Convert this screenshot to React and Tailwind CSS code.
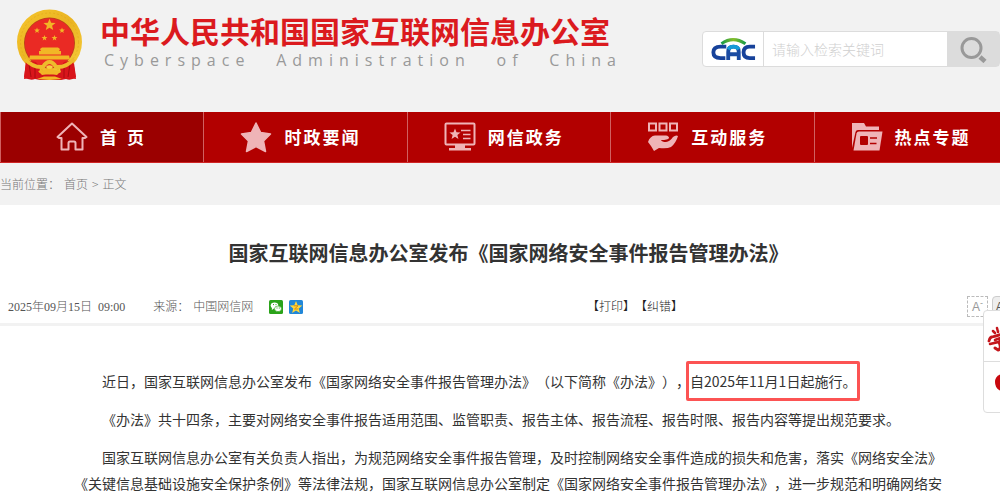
const STAR = "M0,-10 L2.6,-3.4 L9.6,-3.1 L4.1,1.3 L5.9,8.1 L0,4.3 L-5.9,8.1 L-4.1,1.3 L-9.6,-3.1 L-2.6,-3.4 Z";

function Emblem() {
  return (
    <svg width="68" height="72" viewBox="0 0 68 72" role="img" aria-label="国徽" className="shrink-0">
      <defs>
        <linearGradient id="gold" x1="0" y1="0" x2="1" y2="1">
          <stop offset="0" stopColor="#f5c52c" />
          <stop offset="0.5" stopColor="#eab422" />
          <stop offset="1" stopColor="#f8cf3c" />
        </linearGradient>
      </defs>
      <path d="M11 48 L8 69 Q14 73 19 71 L24 72 H45 L50 71 Q55 73 60 69 L57 48 Z" fill="#d3141a" />
      <ellipse cx="33.5" cy="34" rx="32.5" ry="32.5" fill="url(#gold)" />
      <ellipse cx="33.5" cy="34" rx="29" ry="29" fill="none" stroke="#d99a16" strokeWidth="1" strokeDasharray="2 2" opacity="0.4" />
      <ellipse cx="33.5" cy="35" rx="25.5" ry="25.5" fill="#b8441a" />
      <ellipse cx="33.5" cy="35" rx="24.7" ry="24.7" fill="#ea2a24" />
      <g fill="#f2b626">
        <path d={STAR} transform="translate(33.5 17) scale(.63)" />
        <path d={STAR} transform="translate(21 22.500) scale(.3)" />
        <path d={STAR} transform="translate(46 22.500) scale(.3)" />
        <path d={STAR} transform="translate(28.5 30) scale(.3)" />
        <path d={STAR} transform="translate(38.5 30) scale(.3)" />
        <path d="M24 41 L26 39.500 H42 L44 41 L43 43 H45 V46.500 H23 V43 H25 Z" />
        <path d="M14 47.500 H53 L54 51.500 H13 Z" />
      </g>
      <path d="M10 52 L20 54 L24 60 L22 71 L16 70 L8 71 Z M57 52 L48 54 L44 60 L46 71 L52 70 L60 71 Z" fill="#d9151b" />
      <path d="M13 56 L15 69 M54 56 L52 69 M19 57 L19 70 M48 57 L48 70" stroke="#a80c10" strokeWidth="1" fill="none" />
      <path d="M9 51 Q17 60 27 59 Q30 54 33.5 54 Q37 54 40 59 Q50 60 58 51" stroke="#eebb2c" strokeWidth="4" fill="none" />
      <path d="M22 63 L29 62 L33.5 59 L38 62 L45 63 L41 67 L33.5 66 L26 67 Z M21 71 L28 68.500 H39 L46 71 L33.5 72 Z" fill="#f2b626" />
      <ellipse cx="33.5" cy="59" rx="3.2" ry="1.8" fill="#f7cf45" />
    </svg>
  );
}

function CacLogo() {
  return (
    <svg width="46" height="26" viewBox="0 0 48 26" role="img" aria-label="CAC">
      <defs>
        <linearGradient id="arc">
          <stop offset="0" stopColor="#169b48" />
          <stop offset="0.5" stopColor="#86bd2a" />
          <stop offset="1" stopColor="#169b48" />
        </linearGradient>
      </defs>
      <g fill="none" strokeWidth="4">
        <path d="M17 10.5 H11 Q3.5 10.5 3.5 16.5 Q3.5 22.5 11 22.5 H16" stroke="#17429a" />
        <path d="M19 24.5 V16 Q19 10.5 24.500 10.5 Q30 10.5 30 16 V24.5 M19 18.5 H30" stroke="#1a4ba2" />
        <path d="M19 13.5 Q20.5 10.5 24.500 10.5 Q28.500 10.5 30 13.5" stroke="#169bd8" />
        <path d="M47 10.5 H41.500 Q35 10.5 35 16.5 Q35 22.5 41.500 22.5 H47" stroke="#17429a" />
      </g>
      <path d="M12 7.500 Q24 -1 37 7.500" stroke="url(#arc)" strokeWidth="3.2" fill="none" />
    </svg>
  );
}

function HomeIcon() {
  return (
    <svg width="32" height="32" viewBox="0 0 32 32" fill="none" stroke="#efb4b7" strokeWidth="2" strokeLinejoin="round" aria-hidden="true">
      <path d="M16 2.5 L30.5 16 L29 17 H26.5 V28.5 H19.5 V22 Q19.5 20.5 18 20.5 H14 Q12.5 20.5 12.5 22 V28.5 H5.5 V17 H3 L1.5 16 Z" />
    </svg>
  );
}

function StarIcon() {
  return (
    <svg width="32" height="32" viewBox="0 0 32 32" fill="#efb4b7" stroke="#efb4b7" strokeWidth="1.5" strokeLinejoin="round" aria-hidden="true">
      <path d="M16 2 L20.7 11.5 L30.5 13 L23.5 20 L25.5 30.5 L16 25.6 L6.5 30.5 L8.5 20 L1.5 13 L11.3 11.5 Z" />
    </svg>
  );
}

function MonitorIcon() {
  return (
    <svg width="32" height="32" viewBox="0 0 32 32" aria-hidden="true">
      <rect x="1.5" y="2.5" width="29" height="21" rx="1" fill="none" stroke="#efb4b7" strokeWidth="2" />
      <path d={STAR} transform="translate(11 13.3) scale(.58)" fill="#efb4b7" />
      <path d="M17 9.5 H26.5 M19 13.5 H26.5 M19 17.5 H26.5" stroke="#efb4b7" strokeWidth="1.6" />
      <path d="M11 24 H21 V27 H27 V29.5 H5 V27 H11 Z" fill="#efb4b7" />
    </svg>
  );
}

function HandIcon() {
  return (
    <svg width="32" height="32" viewBox="0 0 32 32" aria-hidden="true">
      <g fill="none" stroke="#efb4b7" strokeWidth="2">
        <rect x="2" y="2.5" width="7" height="7" />
        <rect x="12.5" y="2.5" width="7" height="7" />
        <rect x="23" y="2.5" width="7" height="7" />
      </g>
      <path d="M1 21 Q3 15 8 14.5 L19 14.5 Q22 15 22 17 Q21 19 14 19 Q15 21 19 21 Q23 20.5 26 16 Q29 13.5 31 15 Q29 22 24 26 Q20 28 12 27 L7 30 L4 25 Z" fill="#efb4b7" />
    </svg>
  );
}

function FolderIcon() {
  return (
    <svg width="32" height="32" viewBox="0 0 32 32" aria-hidden="true">
      <path d="M1 2 H13 L15 5.5 H28 V9 H7 Q5 9 4.5 11 L1 27 Z" fill="#efb4b7" />
      <path d="M8 10.5 H31.5 L28.5 29.5 H2.5 L5.5 12.5 Q6 10.5 8 10.5 Z" fill="#efb4b7" />
      <rect x="9" y="15" width="8" height="9" rx="1" fill="#b20000" />
      <path d="M19 17 H26 M19 22.5 H25.5" stroke="#b20000" strokeWidth="1.6" />
    </svg>
  );
}

const navItems = [
  { label: "首 页", icon: HomeIcon, active: true },
  { label: "时政要闻", icon: StarIcon },
  { label: "网信政务", icon: MonitorIcon },
  { label: "互动服务", icon: HandIcon },
  { label: "热点专题", icon: FolderIcon },
];

function Header() {
  return (
    <header className="flex h-28 items-start justify-between px-4">
      <div className="flex items-start gap-4 pt-2">
        <Emblem />
        <div className="pt-1">
          <h1 className="whitespace-nowrap text-[30px] font-bold leading-9 text-[#db1a1e]">
            中华人民共和国国家互联网信息办公室
          </h1>
          <p className="-mr-3 flex justify-between pl-1 font-['Open_Sans',sans-serif] text-base leading-6 tracking-[6px] text-[#999]">
            <span>Cyberspace</span>
            <span>Administration</span>
            <span>of</span>
            <span>China</span>
          </p>
        </div>
      </div>
      <form
        className="mt-[31px] mr-px flex h-9 w-[298px] rounded-sm border border-[#dcdcdc] bg-white"
        onSubmit={(e) => e.preventDefault()}
      >
        <a href="#cac" className="flex w-[61px] items-center justify-center border-r border-[#dcdcdc]">
          <CacLogo />
        </a>
        <input
          type="text"
          aria-label="检索关键词"
          placeholder="请输入检索关键词"
          className="min-w-0 flex-1 px-2 text-sm font-light outline-none placeholder:text-[#d0d0d0]"
        />
        <button type="submit" aria-label="搜索" className="flex w-[52px] items-center justify-center bg-[#dcdcdc]">
          <svg width="28" height="28" viewBox="0 0 28 28" fill="none" stroke="#999">
            <circle cx="12.5" cy="13" r="9.5" strokeWidth="3" />
            <path d="M21 22 L26 26.5" strokeWidth="4.5" />
          </svg>
        </button>
      </form>
    </header>
  );
}

function Nav() {
  return (
    <nav className="grid grid-cols-5 border-b border-[#cf2525] bg-[#b20000]">
      {navItems.map(({ label, icon: Icon, active }) => (
        <a
          key={label}
          href="#nav"
          className={`flex h-[50px] items-center gap-3 border-l border-[#d06060] text-[17px] font-bold tracking-[2px] text-white ${
            active ? "bg-[#9b0000] pl-[55px]" : "pl-9"
          }`}
        >
          <Icon />
          {active ? (
            <span className="flex gap-2">
              <span>首</span>
              <span>页</span>
            </span>
          ) : (
            <span>{label}</span>
          )}
        </a>
      ))}
    </nav>
  );
}

function MetaRow() {
  return (
    <div className="flex h-9 items-center border-b-[3px] border-[#f2f2f2] pl-2 pr-1 font-['Liberation_Serif','Noto_Sans_CJK_SC',serif] text-xs font-light text-[#555]">
      <time className="whitespace-nowrap">2025年09月15日&nbsp; 09:00</time>
      <span className="ml-7">来源：</span>
      <span className="ml-1">中国网信网</span>
      <a href="#wechat" aria-label="微信" className="ml-4">
        <svg width="14" height="14" viewBox="0 0 14 14">
          <rect width="14" height="14" rx="1.5" fill="#2ba31a" />
          <ellipse cx="5.5" cy="5.5" rx="3.8" ry="3.1" fill="#fff" />
          <path d="M3 7.5 L2.8 10 L5 8.5 Z" fill="#fff" />
          <ellipse cx="9" cy="8.8" rx="3.5" ry="2.8" fill="#fff" stroke="#2ba31a" strokeWidth=".6" />
          <path d="M4 4.6 h1 M6.5 4.6 h1 M7.5 8 h1 M9.8 8 h1" stroke="#2ba31a" />
        </svg>
      </a>
      <a href="#qzone" aria-label="QQ空间" className="ml-1.5">
        <svg width="14" height="14" viewBox="0 0 14 14">
          <rect width="14" height="14" rx="1.5" fill="#2187d8" />
          <path d={STAR} transform="translate(7 7.6) scale(.66)" fill="#ffd83a" />
          <path d="M4.8 5.8 H9 L5.5 9 H9.3" stroke="#d88a10" fill="none" />
        </svg>
      </a>
      <div className="ml-auto mr-[284px] flex text-[#222]">
        <button type="button">【打印】</button>
        <button type="button">【纠错】</button>
      </div>
      <button
        type="button"
        className="h-[21px] w-[21px] border border-dashed border-[#bbb] font-['Liberation_Sans',sans-serif] leading-4 text-[#999]"
      >
        A<sup>-</sup>
      </button>
      <button
        type="button"
        className="ml-1 h-[21px] w-[21px] rounded-sm border border-[#ccc] bg-[#eee] font-['Liberation_Sans',sans-serif] leading-4"
      >
        A<sup>+</sup>
      </button>
    </div>
  );
}

function SideTools() {
  return (
    <aside className="absolute left-[983px] top-[310px] w-[52px] rounded-sm border border-[#ddd] bg-white">
      <a href="#study" className="flex h-[51px] items-center border-b border-[#ddd] pl-[3px] pt-2" aria-label="学习">
        <svg width="30" height="34" viewBox="0 0 30 34" fill="none" stroke="#c4161c" strokeLinecap="round">
          <path d="M6 8 L8 10 M10 5 L11 9 M17 3 L14 8" strokeWidth="2.5" />
          <path d="M2 18 Q3 14 5 14 Q12 12 22 9 L18 14" strokeWidth="2.8" />
          <path d="M8 17 L16 14 L12 19 M3 21 L24 16" strokeWidth="2.5" />
          <path d="M12 19 Q15 26 11 27 L8 25" strokeWidth="3" />
        </svg>
      </a>
      <a href="#party" className="flex h-[50px] items-center pb-2 pl-2.5" aria-label="专题">
        <svg width="26" height="22" viewBox="0 0 26 22">
          <path d="M12 1 Q1 2 1 10 Q1 15 5 18 L9 20 H22 V1 Z" fill="#c8080e" />
        </svg>
      </a>
    </aside>
  );
}

function Article() {
  return (
    <article className="bg-white">
      <h2 className="pt-8 pb-[21px] text-center text-xl font-bold leading-8 text-[#333] [text-spacing-trim:space-all]">
        国家互联网信息办公室发布《国家网络安全事件报告管理办法》
      </h2>
      <MetaRow />
      <div className="space-y-3 px-[74px] pt-[42px] text-sm leading-[26px] text-[#333] [text-spacing-trim:space-all]">
        <p className="indent-[28px]">
          近日，国家互联网信息办公室发布《国家网络安全事件报告管理办法》（以下简称《办法》），
          <span className="relative inline-block indent-0">
            自2025年11月1日起施行。
            <span className="absolute -inset-x-1 -inset-y-[7px] rounded-xs border-[3px] border-[#fc5353]" />
          </span>
        </p>
        <p className="indent-[28px]">
          《办法》共十四条，主要对网络安全事件报告适用范围、监管职责、报告主体、报告流程、报告时限、报告内容等提出规范要求。
        </p>
        <p className="indent-[28px]">
          国家互联网信息办公室有关负责人指出，为规范网络安全事件报告管理，及时控制网络安全事件造成的损失和危害，落实《网络安全法》《关键信息基础设施安全保护条例》等法律法规，国家互联网信息办公室制定《国家网络安全事件报告管理办法》，进一步规范和明确网络安
        </p>
      </div>
    </article>
  );
}

export default function App() {
  return (
    <div className="relative overflow-hidden bg-white font-['Noto_Sans_CJK_SC',sans-serif]">
      <div className="min-w-[1017px]">
        <div className="bg-[#f2f2f2]">
          <Header />
          <Nav />
          <div className="flex h-[42px] items-center gap-1 text-xs font-light text-[#777]">
            <span>当前位置：</span>
            <a href="#home">首页</a>
            <span>&gt;</span>
            <a href="#text">正文</a>
          </div>
        </div>
        <Article />
      </div>
      <SideTools />
    </div>
  );
}
